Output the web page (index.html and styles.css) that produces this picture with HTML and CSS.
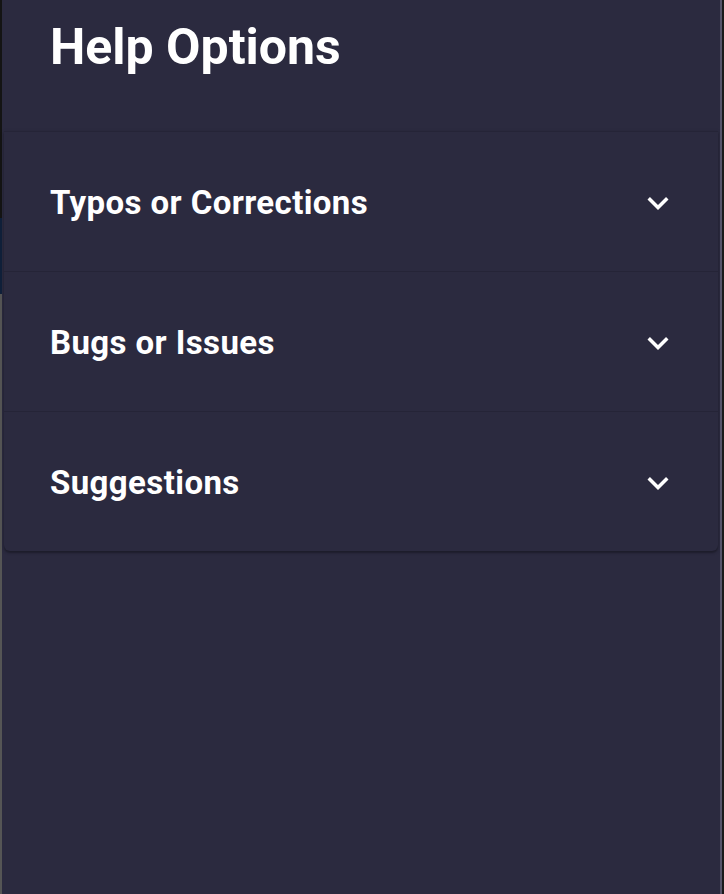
FILE: index.html
```html
<!DOCTYPE html>
<html>
<head>
<meta charset="utf-8">
<link rel="stylesheet" href="styles.css">
</head>
<body>
<div class="screen">
  <div class="edge-left">
    <div class="edge-dark"></div>
    <div class="edge-blue"></div>
    <div class="edge-grey"></div>
  </div>
  <main class="drawer">
    <header class="header">
      <h1 class="title">Help Options</h1>
    </header>
    <section class="accordion">
      <div class="item">
        <span class="item-label">Typos or Corrections</span>
        <svg class="chev" viewBox="0 0 24 24"><path d="M7.41 8.59 12 13.17l4.59-4.58L18 10l-6 6-6-6z"/></svg>
      </div>
      <div class="item">
        <span class="item-label">Bugs or Issues</span>
        <svg class="chev" viewBox="0 0 24 24"><path d="M7.41 8.59 12 13.17l4.59-4.58L18 10l-6 6-6-6z"/></svg>
      </div>
      <div class="item">
        <span class="item-label">Suggestions</span>
        <svg class="chev" viewBox="0 0 24 24"><path d="M7.41 8.59 12 13.17l4.59-4.58L18 10l-6 6-6-6z"/></svg>
      </div>
    </section>
  </main>
  <div class="edge-right">
    <div class="edge-light"></div>
    <div class="edge-black"></div>
  </div>
</div>
</body>
</html>
```
FILE: styles.css
```css
html, body {
  margin: 0;
  padding: 0;
  height: 100%;
  background: #2b2a3f;
}
.screen {
  display: flex;
  width: 724px;
  height: 894px;
  overflow: hidden;
}
.edge-left {
  width: 2px;
  display: flex;
  flex-direction: column;
}
.edge-dark { height: 218px; background: #141414; }
.edge-blue { height: 76px; background: #10203a; }
.edge-grey { flex: 1; background: #555555; }
.edge-right {
  width: 4px;
  display: flex;
}
.edge-light { width: 2px; background: #56546a; }
.edge-black { width: 2px; background: #1a1a1a; }
.drawer {
  flex: 1;
  background: #2b2a3f;
  font-family: Roboto, "Noto Sans", sans-serif;
  color: #ffffff;
}
.header {
  height: 131px;
  box-sizing: border-box;
  padding-left: 48px;
}
.title {
  margin: 0;
  font-size: 50px;
  font-weight: 700;
  line-height: 94px;
}
.accordion {
  margin: 0 2px;
  border-radius: 0 0 6px 6px;
  box-shadow: 0 2px 2px rgba(0,0,0,0.25), 0 1px 4px rgba(0,0,0,0.15);
}
.item {
  height: 140px;
  box-sizing: border-box;
  border-top: 1px solid #252437;
  display: flex;
  align-items: center;
  justify-content: space-between;
  padding: 2px 39px 0 46px;
}
.item-label {
  font-size: 33px;
  font-weight: 700;
  letter-spacing: 0.4px;
}
.chev {
  width: 42px;
  height: 42px;
  fill: #ffffff;
}
```
